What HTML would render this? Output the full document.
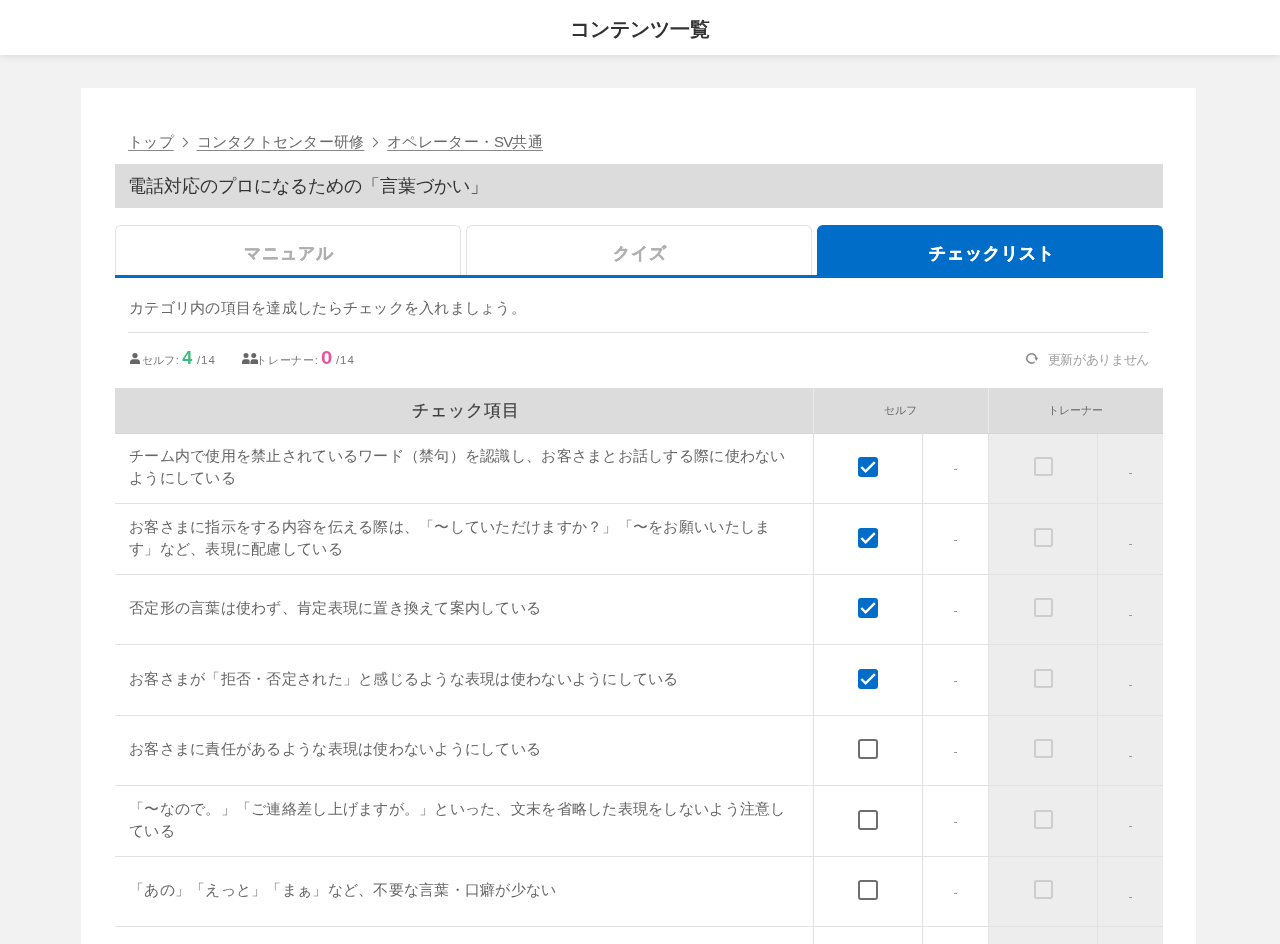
<!DOCTYPE html>
<html lang="ja">
<head>
<meta charset="utf-8">
<title>コンテンツ一覧</title>
<style>
*{box-sizing:border-box;margin:0;padding:0}
html,body{width:1280px;height:944px;overflow:hidden}
body{will-change:transform;background:#f2f2f2;font-family:"Liberation Sans",sans-serif;color:#666;position:relative}
.abs{position:absolute}
#hdr{position:absolute;left:0;top:0;width:1280px;height:55px;background:#fff;box-shadow:0 1px 8px rgba(0,0,0,.11);z-index:2}
#hdr h1{position:absolute;left:0;width:1280px;top:17px;line-height:24px;text-align:center;font-size:20px;font-weight:bold;color:#333;-webkit-text-stroke:0}
#card{position:absolute;left:81.4px;top:88.3px;width:1115px;height:900px;background:#fff}
.t{position:absolute;white-space:nowrap}
#bc{left:128px;top:131px;font-size:15px;letter-spacing:0.27px;line-height:22px;color:#666}
#bc a{color:#6a6a6a;text-decoration:underline;text-decoration-color:#888;text-underline-offset:3px}
#bc .sep{display:inline-block;width:22.7px;text-align:center;text-decoration:none}
#ttl{position:absolute;left:115px;top:164px;width:1048px;height:44px;background:#dcdcdc}
#ttl span{position:absolute;left:13px;top:10px;font-size:18px;line-height:24px;color:#333}
.tab{position:absolute;top:225px;width:345.5px;height:52px;border:1px solid #e3e3e3;border-bottom:none;border-radius:6px 6px 0 0;background:#fff;text-align:center;font-size:17px;font-weight:bold;letter-spacing:1px;color:#b0b0b0;line-height:52px;padding-top:1.5px;padding-left:3px;-webkit-text-stroke:0.35px currentColor}
.tab.on{background:#006ec9;border-color:#006ec9;color:#fff}
#tabline{position:absolute;left:115px;top:275px;width:1048px;height:2.5px;background:#006ec9}
#desc{left:129px;top:297px;font-size:15px;letter-spacing:0.27px;line-height:22px;color:#666}
#div1{position:absolute;left:128px;top:332px;width:1021px;height:1px;background:#e0e0e0}

#stats{left:129px;top:348px;height:20px;font-size:11px;color:#777;line-height:20px}
.ico{position:absolute}
.num{position:absolute;font-weight:bold;font-size:18px;line-height:20px}
.sm{position:absolute;font-size:11px;line-height:16px;color:#777;white-space:nowrap}
.sm.n14{font-size:11.5px;letter-spacing:0.9px}
#upd{position:absolute;left:1047.5px;top:351px;font-size:13px;letter-spacing:-0.3px;line-height:18px;color:#a0a0a0;white-space:nowrap}
#thead{position:absolute;left:115px;top:387.7px;width:1048px;height:46px;background:#dcdcdc;border-bottom:1px solid #d6d6d6}
#thead .vl{position:absolute;top:0;width:1px;height:45px;background:#ebebeb}
#thead .h{position:absolute;top:0;line-height:45px;text-align:center;white-space:nowrap;-webkit-text-stroke:0.2px currentColor}
.row{position:absolute;left:115px;width:1048px;height:71px}
.row .tr{position:absolute;left:873px;top:0;width:175px;height:100%;background:#ededed}
.hl{position:absolute;left:115px;width:1048px;height:1px;background:#e2e2e2}
.vline{position:absolute;width:1px;background:#e2e2e2}
.txt{position:absolute;left:14px;font-size:15px;letter-spacing:0.27px;line-height:22.5px;color:#666;white-space:nowrap}
.cb{position:absolute;left:743px;width:20px;height:20px;border-radius:3px}
.cb.on{background:#006ec9}
.cb.off{border:2px solid #6e6e6e}
.cb.dis{left:918.5px;width:19px;height:19px;border:2px solid #cdcdcd;border-radius:2.5px}
.dash{position:absolute;width:3px;height:1px;background:#9a9a9a}
</style>
</head>
<body>
<div id="hdr"><h1>コンテンツ一覧</h1></div>
<div id="card"></div>

<div id="bc" class="t"><a>トップ</a><span class="sep"><svg width="7" height="11" viewBox="0 0 7 11" style="vertical-align:-1px"><path d="M1 0.8 L5.6 5.5 L1 10.2" fill="none" stroke="#777" stroke-width="1.1"/></svg></span><a>コンタクトセンター研修</a><span class="sep"><svg width="7" height="11" viewBox="0 0 7 11" style="vertical-align:-1px"><path d="M1 0.8 L5.6 5.5 L1 10.2" fill="none" stroke="#777" stroke-width="1.1"/></svg></span><a>オペレーター・<span style="letter-spacing:-0.8px">SV</span>共通</a></div>
<div id="ttl"><span>電話対応のプロになるための「言葉づかい」</span></div>

<div class="tab" style="left:115px">マニュアル</div>
<div class="tab" style="left:466px">クイズ</div>
<div class="tab on" style="left:817px;width:346px">チェックリスト</div>
<div id="tabline"></div>

<div id="desc" class="t">カテゴリ内の項目を達成したらチェックを入れましょう。</div>
<div id="div1"></div>

<svg class="ico" style="left:129.8px;top:352.8px" width="10" height="11.5" viewBox="0 0 10 11.5"><circle cx="5" cy="2.6" r="2.6" fill="#666"/><path d="M0 11.5 V9.3 C0 7.2 1.5 6.2 3 6.2 H7 C8.5 6.2 10 7.2 10 9.3 V11.5 Z" fill="#666"/></svg>
<div class="sm" style="left:141.5px;top:352px;letter-spacing:0.45px">セルフ:</div>
<div class="num" style="left:182.3px;top:347.5px;color:#3dbd7d">4</div>
<div class="sm n14" style="left:197px;top:352px">/14</div>
<svg class="ico" style="left:241.9px;top:352.8px" width="16.5" height="11.5" viewBox="0 0 16.5 11.5"><circle cx="4" cy="2.6" r="2.5" fill="#666"/><circle cx="11.8" cy="2.6" r="2.5" fill="#666"/><path d="M0 11.5 V9.3 C0 7.2 1.2 6.2 2.5 6.2 H5.8 C7 6.2 7.6 7 7.6 8.5 V11.5 Z" fill="#666"/><path d="M8.4 11.5 V9.3 C8.4 7.2 9.6 6.2 10.8 6.2 H14 C15.3 6.2 16.5 7.2 16.5 9.3 V11.5 Z" fill="#666"/></svg>
<div class="sm" style="left:256px;top:352px;letter-spacing:0.75px">トレーナー:</div>
<div class="num" style="left:320.8px;top:348px;color:#e8559e;transform:scaleX(1.13);transform-origin:0 0">0</div>
<div class="sm n14" style="left:336px;top:352px">/14</div>

<svg class="ico" style="left:1022px;top:348px" width="20" height="20" viewBox="0 0 20 20"><path d="M12.6 14.0 A4.7 4.7 0 1 1 14.2 10.2" fill="none" stroke="#8a8a8a" stroke-width="1.6"/><path d="M12.3 9.6 L16.3 9.8 L14.3 13.0 Z" fill="#8a8a8a"/></svg>
<div id="upd">更新がありません</div>

<div id="thead">
 <div class="vl" style="left:698px"></div><div class="vl" style="left:873px"></div>
 <div class="h" style="left:0;width:698px;font-size:17px;color:#3c3c3c;letter-spacing:1px;padding-left:4.5px">チェック項目</div>
 <div class="h" style="left:698px;width:175px;font-size:11px;color:#666;-webkit-text-stroke:0">セルフ</div>
 <div class="h" style="left:873px;width:175px;font-size:11px;color:#666;-webkit-text-stroke:0">トレーナー</div>
</div>
<div class="row" style="top:433.7px;height:69.30000000000001px"><div class="tr"></div><div class="txt" style="top:11.15px">チーム内で使用を禁止されているワード（禁句）を認識し、お客さまとお話しする際に使わない<br>ようにしている</div><div class="cb on" style="top:23.15px"><svg width="20" height="20" viewBox="0 0 20 20"><path d="M3.3 10 L7.6 14.3 L16.8 5.1" fill="none" stroke="#fff" stroke-width="2.4"/></svg></div><div class="dash" style="left:838.5px;top:35.65px"></div><div class="cb dis" style="top:23.15px"></div><div class="dash" style="left:1013.5px;top:39.65px"></div></div>
<div class="hl" style="top:503px"></div>
<div class="row" style="top:504px;height:70px"><div class="tr"></div><div class="txt" style="top:11.50px">お客さまに指示をする内容を伝える際は、「〜していただけますか？」「〜をお願いいたしま<br>す」など、表現に配慮している</div><div class="cb on" style="top:23.50px"><svg width="20" height="20" viewBox="0 0 20 20"><path d="M3.3 10 L7.6 14.3 L16.8 5.1" fill="none" stroke="#fff" stroke-width="2.4"/></svg></div><div class="dash" style="left:838.5px;top:36.00px"></div><div class="cb dis" style="top:23.50px"></div><div class="dash" style="left:1013.5px;top:40.00px"></div></div>
<div class="hl" style="top:574px"></div>
<div class="row" style="top:575px;height:69px"><div class="tr"></div><div class="txt" style="top:22.25px">否定形の言葉は使わず、肯定表現に置き換えて案内している</div><div class="cb on" style="top:23.00px"><svg width="20" height="20" viewBox="0 0 20 20"><path d="M3.3 10 L7.6 14.3 L16.8 5.1" fill="none" stroke="#fff" stroke-width="2.4"/></svg></div><div class="dash" style="left:838.5px;top:35.50px"></div><div class="cb dis" style="top:23.00px"></div><div class="dash" style="left:1013.5px;top:39.50px"></div></div>
<div class="hl" style="top:644px"></div>
<div class="row" style="top:645px;height:70px"><div class="tr"></div><div class="txt" style="top:22.75px">お客さまが「拒否・否定された」と感じるような表現は使わないようにしている</div><div class="cb on" style="top:23.50px"><svg width="20" height="20" viewBox="0 0 20 20"><path d="M3.3 10 L7.6 14.3 L16.8 5.1" fill="none" stroke="#fff" stroke-width="2.4"/></svg></div><div class="dash" style="left:838.5px;top:36.00px"></div><div class="cb dis" style="top:23.50px"></div><div class="dash" style="left:1013.5px;top:40.00px"></div></div>
<div class="hl" style="top:715px"></div>
<div class="row" style="top:716px;height:69px"><div class="tr"></div><div class="txt" style="top:22.25px">お客さまに責任があるような表現は使わないようにしている</div><div class="cb off" style="top:23.00px"></div><div class="dash" style="left:838.5px;top:35.50px"></div><div class="cb dis" style="top:23.00px"></div><div class="dash" style="left:1013.5px;top:39.50px"></div></div>
<div class="hl" style="top:785px"></div>
<div class="row" style="top:786px;height:70px"><div class="tr"></div><div class="txt" style="top:11.50px">「〜なので。」「ご連絡差し上げますが。」といった、文末を省略した表現をしないよう注意し<br>ている</div><div class="cb off" style="top:23.50px"></div><div class="dash" style="left:838.5px;top:36.00px"></div><div class="cb dis" style="top:23.50px"></div><div class="dash" style="left:1013.5px;top:40.00px"></div></div>
<div class="hl" style="top:856px"></div>
<div class="row" style="top:857px;height:69px"><div class="tr"></div><div class="txt" style="top:22.25px">「あの」「えっと」「まぁ」など、不要な言葉・口癖が少ない</div><div class="cb off" style="top:23.00px"></div><div class="dash" style="left:838.5px;top:35.50px"></div><div class="cb dis" style="top:23.00px"></div><div class="dash" style="left:1013.5px;top:39.50px"></div></div>
<div class="hl" style="top:926px"></div>
<div class="row" style="top:927px;height:70px"><div class="tr"></div><div class="txt" style="top:22.75px"></div><div class="cb off" style="top:23.50px"></div><div class="dash" style="left:838.5px;top:36.00px"></div><div class="cb dis" style="top:23.50px"></div><div class="dash" style="left:1013.5px;top:40.00px"></div></div>
<div class="hl" style="top:997px"></div>
<div class="vline" style="left:813px;top:433.7px;height:520px"></div><div class="vline" style="left:922px;top:433.7px;height:520px"></div><div class="vline" style="left:988px;top:433.7px;height:520px"></div><div class="vline" style="left:1097px;top:433.7px;height:520px"></div>

</body>
</html>
